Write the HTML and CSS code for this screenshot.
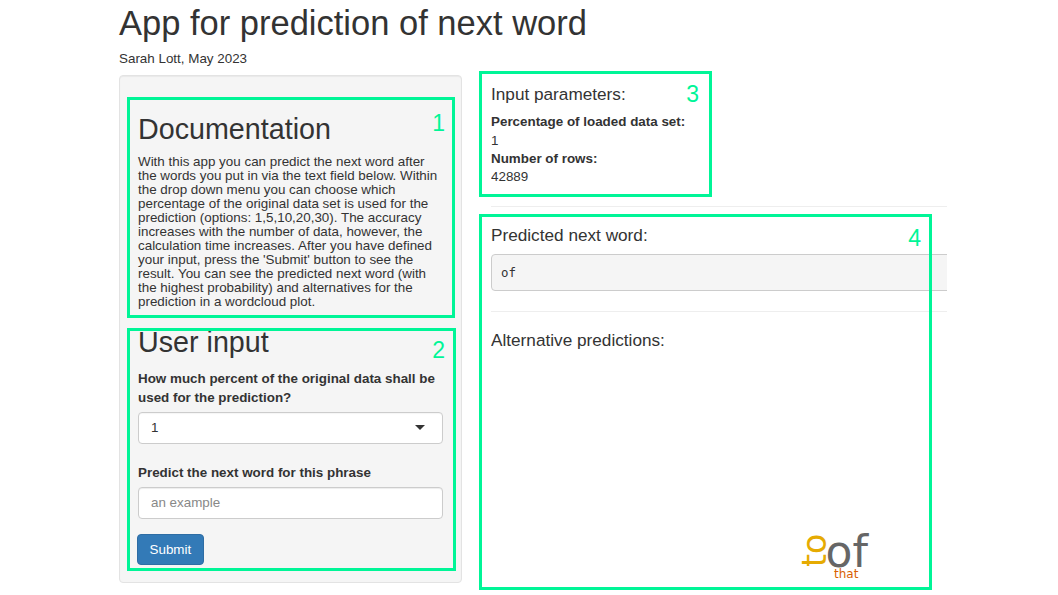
FILE: index.html
```html
<!DOCTYPE html>
<html>
<head>
<meta charset="utf-8">
<title>App for prediction of next word</title>
<link rel="stylesheet" href="styles.css">
</head>
<body>
<div class="page">
  <h1 class="title">App for prediction of next word</h1>
  <div class="subtitle">Sarah Lott, May 2023</div>
  <div class="layout">
    <div class="sidebar">
      <h2 class="doc-title">Documentation</h2>
      <p class="doc-text">With this app you can predict the next word after the words you put in via the text field below. Within the drop down menu you can choose which percentage of the original data set is used for the prediction (options: 1,5,10,20,30). The accuracy increases with the number of data, however, the calculation time increases. After you have defined your input, press the 'Submit' button to see the result. You can see the predicted next word (with the highest probability) and alternatives for the prediction in a wordcloud plot.</p>
      <h2 class="input-title">User input</h2>
      <div class="form-group fg-select">
        <label class="control-label">How much percent of the original data shall be used for the prediction?</label>
        <div class="select"><span>1</span><span class="caret"></span></div>
      </div>
      <div class="form-group fg-text">
        <label class="control-label">Predict the next word for this phrase</label>
        <input class="form-control" type="text" placeholder="an example">
      </div>
      <button class="btn" type="button">Submit</button>
    </div>
    <div class="main">
      <h4 class="h4-first">Input parameters:</h4>
      <div class="params">
        <div class="pl">Percentage of loaded data set:</div>
        <div>1</div>
        <div class="pl">Number of rows:</div>
        <div>42889</div>
      </div>
      <hr class="hr1">
      <h4>Predicted next word:</h4>
      <pre class="result">of</pre>
      <hr class="hr2">
      <h4>Alternative predictions:</h4>
      <div class="plot">
        <span class="w w-of">of</span>
        <span class="w w-to">to</span>
        <span class="w w-that">that</span>
      </div>
    </div>
  </div>

  <div class="mark mark1"><span class="num n1">1</span></div>
  <div class="mark mark2"><span class="num n2">2</span></div>
  <div class="mark mark3"><span class="num n3">3</span></div>
  <div class="mark mark4"><span class="num n4">4</span></div>
</div>
</body>
</html>
```

FILE: styles.css
```css
* { box-sizing: border-box; }
html, body { margin: 0; padding: 0; background: #fff; }
body {
  font-family: "Liberation Sans", Arial, Helvetica, sans-serif;
  font-size: 13.4px;
  line-height: 19.1px;
  color: #333;
}
.page {
  position: relative;
  padding-left: 119px;
  width: 1058px;
  height: 595px;
  overflow: hidden;
}
.title {
  font-size: 34.5px;
  font-weight: 500;
  line-height: 38px;
  margin: 4px 0 7px;
}
.subtitle {
  line-height: 19px;
  margin-bottom: 7px;
}
.layout {
  display: flex;
  gap: 29px;
  align-items: flex-start;
}
.sidebar {
  width: 343px;
  height: 508px;
  background: #f5f5f5;
  border: 1px solid #e3e3e3;
  border-radius: 4px;
  box-shadow: inset 0 1px 1px rgba(0,0,0,.05);
  padding: 18px;
}
h2 {
  font-size: 28.7px;
  font-weight: 500;
  line-height: 31.6px;
  margin: 0;
}
.doc-title { margin: 20px 0 9.6px; }
.doc-text {
  font-size: 13.4px;
  line-height: 14px;
  margin: 0 0 18.3px;
}
.input-title { margin: 0 0 9.6px; }
.control-label {
  display: block;
  font-weight: 700;
  margin-bottom: 4.8px;
}
.fg-select { margin-bottom: 19px; }
.fg-text { margin-bottom: 15.4px; }
.select {
  height: 32.5px;
  background: #fff;
  border: 1px solid #ccc;
  border-radius: 4px;
  display: flex;
  align-items: center;
  justify-content: space-between;
  padding: 0 17px 0 12px;
  box-shadow: inset 0 1px 1px rgba(0,0,0,.04);
}
.caret {
  width: 0;
  height: 0;
  border-top: 5px solid #333;
  border-left: 5px solid transparent;
  border-right: 5px solid transparent;
}
.form-control {
  display: block;
  width: 100%;
  height: 31.5px;
  border: 1px solid #ccc;
  border-radius: 4px;
  padding: 0 12px;
  font-family: inherit;
  font-size: 13.4px;
  color: #555;
  background: #fff;
  box-shadow: inset 0 1px 1px rgba(0,0,0,.075);
}
.form-control::placeholder { color: #888; }
.btn {
  display: block;
  margin-left: -1px;
  height: 31.3px;
  padding: 0 11.5px;
  font-family: inherit;
  font-size: 13.4px;
  color: #fff;
  background: #337ab7;
  border: 1px solid #2e6da4;
  border-radius: 4px;
}
.main {
  width: 456px;
  height: 515px;
  overflow: hidden;
}
h4 {
  font-size: 17.2px;
  font-weight: 500;
  line-height: 18.9px;
  margin: 0 0 9.6px;
}
.h4-first { margin-top: 9.6px; }
.params { line-height: 18.4px; }
.pl { font-weight: 700; }
hr {
  border: 0;
  border-top: 1px solid #eee;
  margin: 0;
}
.hr1 { margin: 19px 0 19px; }
.hr2 { margin: 20px 0 19px; }
.result {
  width: 480px;
  margin: 0;
  padding: 9px 9px;
  font-family: "DejaVu Sans Mono", "Liberation Mono", monospace;
  font-size: 12.4px;
  line-height: 17px;
  color: #333;
  background: #f5f5f5;
  border: 1px solid #ccc;
  border-radius: 4px;
}
.plot {
  position: relative;
  height: 232px;
}
.w {
  position: absolute;
  font-family: "DejaVu Sans", sans-serif;
  white-space: nowrap;
}
.w-of { left: 334.6px; top: 174.4px; font-size: 44px; line-height: 0.8; color: #666666; }
.w-to {
  left: 307px; top: 207.2px; font-size: 33px; line-height: 1; color: #e6ab02;
  transform-origin: left top;
  transform: rotate(-90deg);
}
.w-that { left: 343px; top: 208px; font-size: 12px; line-height: 1; color: #d95f02; }

.mark {
  position: absolute;
  border: 3px solid #00f597;
}
.mark1 { left: 127px; top: 97px; width: 328px; height: 221px; }
.mark2 { left: 127px; top: 328px; width: 329px; height: 243px; }
.mark3 { left: 479px; top: 71px; width: 233px; height: 126px; }
.mark4 { left: 479px; top: 214px; width: 453px; height: 376px; }
.num {
  position: absolute;
  font-size: 23px;
  line-height: 1;
  color: #00f597;
}
.n1 { top: 12px; right: 7px; }
.n2 { top: 8px; right: 8px; }
.n3 { top: 9px; right: 10px; }
.n4 { top: 10px; right: 8px; }
```
